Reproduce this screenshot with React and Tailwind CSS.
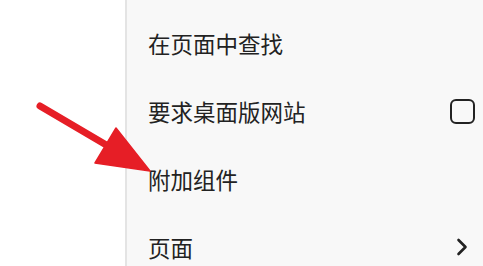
import React from 'react';

const items = [
  { label: '在页面中查找' },
  { label: '要求桌面版网站', right: 'checkbox' },
  { label: '附加组件' },
  { label: '页面', right: 'chevron' },
];

function Checkbox() {
  return <div className="w-[25px] h-[25px] rounded-[6px] border-[2.5px] border-[#222]" />;
}

function Chevron() {
  return (
    <svg width="12" height="18" viewBox="0 0 12 18" fill="none">
      <path d="M2.5 2 L9.5 9 L2.5 16" stroke="#222" strokeWidth="2.6" strokeLinecap="round" strokeLinejoin="round" />
    </svg>
  );
}

export default function App() {
  return (
    <div
      className="relative flex w-[483px] h-[266px] overflow-hidden bg-white"
      style={{ fontFamily: '"Noto Sans CJK SC", "Noto Sans", sans-serif' }}
    >
      <div className="w-[125px] bg-white" />
      <div className="flex-1 bg-[#f8f8f8] border-l-2 border-[#e4e4e4] pt-[9px] pl-[21px] pr-[8px]">
        {items.map((it) => (
          <div key={it.label} className="h-[68px] flex items-center justify-between">
            <span className="text-[22.5px] leading-none text-[#222]">{it.label}</span>
            {it.right === 'checkbox' && <Checkbox />}
            {it.right === 'chevron' && (
              <div className="mr-[7px]">
                <Chevron />
              </div>
            )}
          </div>
        ))}
      </div>

      {/* red pointer arrow */}
      <svg className="absolute left-0 top-0 pointer-events-none" width="483" height="266" viewBox="0 0 483 266">
        <line x1="40" y1="106" x2="108" y2="146" stroke="#e61e26" strokeWidth="7" strokeLinecap="round" />
        <polygon points="116,128 95,163 150,171" fill="#e61e26" stroke="#e61e26" strokeWidth="1.5" strokeLinejoin="round" />
      </svg>
    </div>
  );
}
